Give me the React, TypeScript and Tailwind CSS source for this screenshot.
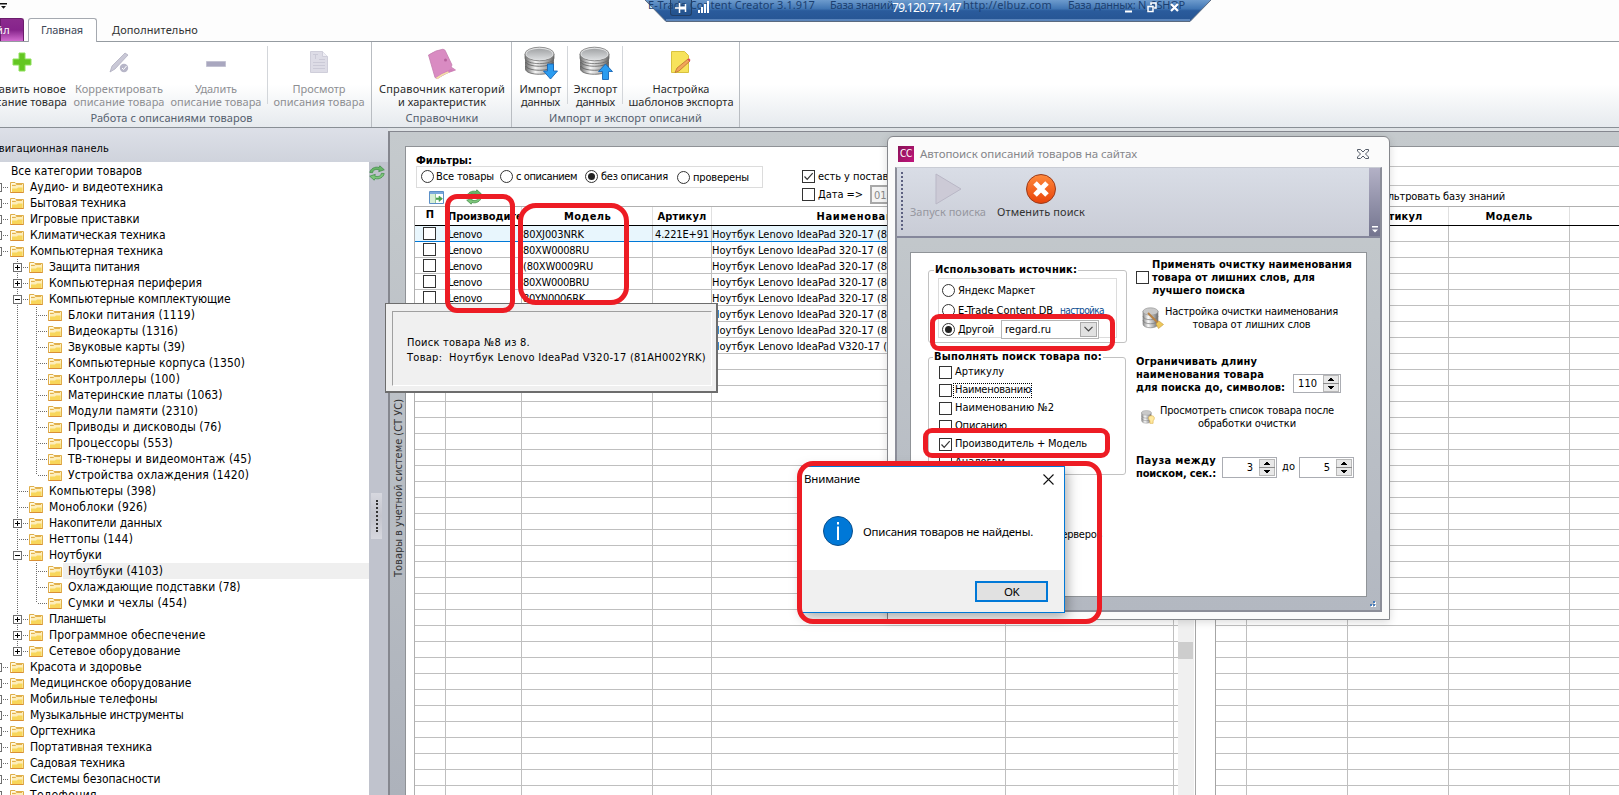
import { useLayoutEffect, useRef } from 'react';
import type { ReactNode } from 'react';

// Text run spread over a fixed length, like GDI text with hinted advances.
function Fit({ w, className = '', vertical = false, children }: { w: number; className?: string; vertical?: boolean; children: string }) {
  const ref = useRef<HTMLSpanElement>(null);

  useLayoutEffect(() => {
    const el = ref.current;
    if (!el || !children) return;
    el.style.letterSpacing = '0px';
    const rect = el.getBoundingClientRect();
    const gap = (w - (vertical ? rect.height : rect.width)) / children.length;
    el.style.letterSpacing = `${gap}px`;
  }, [w, vertical, children]);

  return <span ref={ref} className={`inline-block shrink-0 whitespace-pre ${className}`}>{children}</span>;
}

type Node = { t: string; w: number; lvl: number; box?: '+' | '-'; last?: boolean; selected?: boolean };

const TREE: Node[] = [
  { t: 'Аудио- и видеотехника', w: 133, lvl: 1, box: '+' },
  { t: 'Бытовая техника', w: 96, lvl: 1, box: '+' },
  { t: 'Игровые приставки', w: 109.5, lvl: 1, box: '+' },
  { t: 'Климатическая техника', w: 135.5, lvl: 1, box: '+' },
  { t: 'Компьютерная техника', w: 133, lvl: 1, box: '-' },
  { t: 'Защита питания', w: 90.5, lvl: 2, box: '+' },
  { t: 'Компьютерная периферия', w: 153, lvl: 2, box: '+' },
  { t: 'Компьютерные комплектующие', w: 181.5, lvl: 2, box: '-' },
  { t: 'Блоки питания (1119)', w: 127, lvl: 3 },
  { t: 'Видеокарты (1316)', w: 110, lvl: 3 },
  { t: 'Звуковые карты (39)', w: 117, lvl: 3 },
  { t: 'Компьютерные корпуса (1350)', w: 177, lvl: 3 },
  { t: 'Контроллеры (100)', w: 112, lvl: 3 },
  { t: 'Материнские платы (1063)', w: 154.5, lvl: 3 },
  { t: 'Модули памяти (2310)', w: 130, lvl: 3 },
  { t: 'Приводы и дисководы (76)', w: 153.5, lvl: 3 },
  { t: 'Процессоры (553)', w: 105, lvl: 3 },
  { t: 'ТВ-тюнеры и видеомонтаж (45)', w: 183.5, lvl: 3 },
  { t: 'Устройства охлаждения (1420)', w: 181, lvl: 3, last: true },
  { t: 'Компьютеры (398)', w: 107, lvl: 2 },
  { t: 'Моноблоки (926)', w: 98.5, lvl: 2 },
  { t: 'Накопители данных', w: 113, lvl: 2, box: '+' },
  { t: 'Неттопы (144)', w: 84, lvl: 2 },
  { t: 'Ноутбуки', w: 52.5, lvl: 2, box: '-' },
  { t: 'Ноутбуки (4103)', w: 95, lvl: 3, selected: true },
  { t: 'Охлаждающие подставки (78)', w: 172.5, lvl: 3 },
  { t: 'Сумки и чехлы (454)', w: 119, lvl: 3, last: true },
  { t: 'Планшеты', w: 56.5, lvl: 2, box: '+' },
  { t: 'Программное обеспечение', w: 156.5, lvl: 2, box: '+' },
  { t: 'Сетевое оборудование', w: 131.5, lvl: 2, box: '+', last: true },
  { t: 'Красота и здоровье', w: 111.5, lvl: 1, box: '+' },
  { t: 'Медицинское оборудование', w: 161.5, lvl: 1, box: '+' },
  { t: 'Мобильные телефоны', w: 127.5, lvl: 1, box: '+' },
  { t: 'Музыкальные инструменты', w: 153.5, lvl: 1, box: '+' },
  { t: 'Оргтехника', w: 65.5, lvl: 1, box: '+' },
  { t: 'Портативная техника', w: 122, lvl: 1, box: '+' },
  { t: 'Садовая техника', w: 95, lvl: 1, box: '+' },
  { t: 'Системы безопасности', w: 130.5, lvl: 1, box: '+' },
  { t: 'Телефония', w: 67, lvl: 1, box: '+' },
];

const PRODUCTS = [
  { model: '80XJ003NRK', mw: 61, art: '4.221E+91', name: 'Ноутбук Lenovo IdeaPad 320-17 (8' },
  { model: '80XW0008RU', mw: 66, art: '', name: 'Ноутбук Lenovo IdeaPad 320-17 (8' },
  { model: '(80XW0009RU', mw: 70, art: '', name: 'Ноутбук Lenovo IdeaPad 320-17 (8' },
  { model: '80XW000BRU', mw: 66, art: '', name: 'Ноутбук Lenovo IdeaPad 320-17 (8' },
  { model: '80YN0006RK', mw: 62, art: '', name: 'Ноутбук Lenovo IdeaPad 320-17 (8' },
  { model: '', mw: 0, art: '', name: 'Ноутбук Lenovo IdeaPad 320-17 (8' },
  { model: '', mw: 0, art: '', name: 'Ноутбук Lenovo IdeaPad 320-17 (8' },
  { model: '', mw: 0, art: '', name: 'Ноутбук Lenovo IdeaPad V320-17 (' },
];

const EMPTY_ROWS = Array.from({ length: 28 }, (_, i) => i);
const ALL_ROWS = Array.from({ length: 36 }, (_, i) => i);

/* ---------- icons ---------- */

function Folder() {
  return (
    <svg width="14" height="12" viewBox="0 0 14 12" className="shrink-0">
      <path d="M.5 1.500h4.500l1 1h7.500v9H.5z" fill="#fdeebb" stroke="#dfae4a" />
      <path d="M2 4.500h3.500l1-1H12" stroke="#e3b04c" fill="none" />
      <path d="M2 7.500h5l1-1h4.500V11H2z" fill="#f8d65a" />
      <path d="M1.500 3v8M1.500 2.500h3.500" stroke="#fffbe6" />
      <path d="M.5 11.500h13" stroke="#d98f35" />
    </svg>
  );
}

function Guides({ node, inside }: { node: Node; inside: boolean }) {
  const x = [0, -2.5, 17.5, 36.5][node.lvl];
  const w = [0, 10, 29, 48][node.lvl];
  return (
    <svg width={w} height="16" className="shrink-0" stroke="#6b6b6b" fill="none" shapeRendering="crispEdges">
      {node.lvl === 3 && <path d={`M36.500 0V${node.last ? 8 : 16}`} strokeDasharray="1 1" />}
      {inside && <path d={`M17.500 0V${node.lvl === 2 && node.last ? 8 : 16}`} strokeDasharray="1 1" />}
      <path d={`M${x + (node.box ? 5.5 : 1.5)} 8.500H${w - 1}`} strokeDasharray="1 1" />
      {node.box && (
        <>
          <rect x={x - 4} y="4.500" width="8" height="8" fill="#fff" stroke="#6f6f6f" />
          <path d={`M${x - 2.5} 8.500h5`} stroke="#000" />
          {node.box === '+' && <path d={`M${x} 6v5`} stroke="#000" />}
        </>
      )}
    </svg>
  );
}

function Refresh() {
  return (
    <svg width="16" height="16" viewBox="0 0 16 16" className="shrink-0">
      <path d="M.8 7.500C1.500 3.500 6 1.200 10 2.500L10.800.8l4.500 4-5.600 1.900.5-1.800C7 3.800 4 4.800 3.600 7.700z" fill="#67b567" stroke="#3d8a45" strokeWidth=".7" />
      <path d="M15.200 8.500c-.7 4-5.200 6.300-9.200 5L5.200 15.200l-4.500-4 5.600-1.900-.5 1.800c3.200 1.100 6.200.1 6.600-2.800z" fill="#7cc67a" stroke="#3d8a45" strokeWidth=".7" />
    </svg>
  );
}

function Database({ dir }: { dir: 'up' | 'down' }) {
  return (
    <svg width="34" height="34" viewBox="0 0 34 34" className="mt-[2px]">
      <defs>
        <linearGradient id={`db-${dir}`}>
          <stop offset="0" stopColor="#6e6e6e" />
          <stop offset=".35" stopColor="#f6f6f6" />
          <stop offset=".7" stopColor="#b5b5b5" />
          <stop offset="1" stopColor="#666" />
        </linearGradient>
        <linearGradient id={`top-${dir}`} x2="0" y2="1">
          <stop offset="0" stopColor="#a2a4a6" />
          <stop offset="1" stopColor="#dcdee0" />
        </linearGradient>
      </defs>
      {[20, 16, 12].map((y) => (
        <path key={y} d={`M1.500 ${y}v3c0 7 28 7 28 0V${y}z`} fill={`url(#db-${dir})`} stroke="#5e5e5e" strokeWidth=".8" />
      ))}
      <path d="M1 8v4c0 7.500 29 7.500 29 0V8z" fill={`url(#db-${dir})`} stroke="#6a6a6a" strokeWidth=".8" />
      <ellipse cx="15.500" cy="8" rx="14.500" ry="6.800" fill="#e2e3e4" stroke="#777" strokeWidth=".8" />
      <ellipse cx="15.500" cy="8.300" rx="13" ry="5.600" fill={`url(#top-${dir})`} />
      {dir === 'down' ? (
        <path d="M23.500 18h6v7h4l-7 8-7-8h4z" fill="#2b9cf0" stroke="#1667b8" strokeWidth=".9" />
      ) : (
        <path d="M23.500 33.500h6v-8h4l-7-7.500-7 7.500h4z" fill="#2b9cf0" stroke="#1667b8" strokeWidth=".9" />
      )}
    </svg>
  );
}

function SmallDatabase({ size }: { size: number }) {
  return (
    <svg width={size} height={size} viewBox="0 0 22 22" className="shrink-0">
      <defs>
        <linearGradient id={`sdb-${size}`}>
          <stop offset="0" stopColor="#8a8a8a" />
          <stop offset=".35" stopColor="#fafafa" />
          <stop offset="1" stopColor="#6b6b6b" />
        </linearGradient>
      </defs>
      <path d="M1 4v13c0 5 15 5 15 0V4z" fill={`url(#sdb-${size})`} stroke="#8a8a8a" strokeWidth=".7" />
      <path d="M1 9c0 5 15 5 15 0M1 13c0 5 15 5 15 0" fill="none" stroke="#777" strokeWidth=".7" />
      <ellipse cx="8.500" cy="4.500" rx="7.500" ry="3.700" fill="#c9c9c9" stroke="#999" strokeWidth=".7" />
      {size > 16 ? (
        <>
          <path d="M6 6l10 10" stroke="#b98243" strokeWidth="2" />
          <path d="M14 17l3-3 4.500 3.500-5 4z" fill="#edc85c" stroke="#c79a3a" strokeWidth=".6" />
        </>
      ) : (
        <path d="M16 9c6 0 6 5 3 8v4h-5v-4c-3-3-3-8 2-8z" fill="#ffe9a0" stroke="#dcb04a" />
      )}
    </svg>
  );
}

function Cancel() {
  return (
    <svg width="32" height="32" viewBox="0 0 32 32">
      <defs>
        <linearGradient id="cancel" x2="0" y2="1">
          <stop offset="0" stopColor="#ff8a3c" />
          <stop offset="1" stopColor="#e8430a" />
        </linearGradient>
      </defs>
      <circle cx="16" cy="16" r="14.500" fill="url(#cancel)" stroke="#9a3b1b" />
      <path d="M10 10l12 12M22 10L10 22" stroke="#fff" strokeWidth="5" />
    </svg>
  );
}

/* ---------- form controls ---------- */

function Radio({ on = false }: { on?: boolean }) {
  return (
    <span className="flex h-[13px] w-[13px] shrink-0 items-center justify-center rounded-full border border-[#333] bg-white">
      {on && <span className="h-[7px] w-[7px] rounded-full bg-[#222]" />}
    </span>
  );
}

function Check({ on = false }: { on?: boolean }) {
  return (
    <span className="flex h-[13px] w-[13px] shrink-0 items-center justify-center border border-[#333] bg-white">
      {on && (
        <svg width="11" height="11" viewBox="0 0 11 11" fill="none" stroke="#333" strokeWidth="1.200">
          <path d="M1.500 5.500l2.700 2.800L9.700 2.200" />
        </svg>
      )}
    </span>
  );
}

function Spinner({ value, className }: { value: string; className: string }) {
  return (
    <div className={`flex shrink-0 items-center justify-end border border-[#abadb3] bg-white pr-px ${className}`}>
      <span className="mt-[2px] mr-[6px] text-[11px]">{value}</span>
      <svg width="16" height="17" viewBox="0 0 16 17" shapeRendering="crispEdges">
        <path d="M.5.5h15v16H.5z" fill="#e8e8e8" stroke="#b8b8b8" />
        <path d="M0 8.500h16" stroke="#8c8c8c" />
        <path d="M7 3h2v1h1v1h1v1H5V5h1V4h1zM5 11h6v1h-1v1H9v1H7v-1H6v-1H5z" fill="#000" />
      </svg>
    </div>
  );
}

/* ---------- ribbon ---------- */

type RibbonItem = { icon: ReactNode; lines: [string, number][]; off?: boolean; className: string };

function RibbonButton({ icon, lines, off, className }: RibbonItem) {
  return (
    <div className={`flex shrink-0 flex-col items-center ${off ? 'text-[#8e8f93]' : 'text-[#2b2b2b]'} ${className}`}>
      <div className="flex h-[40px] items-center justify-center">{icon}</div>
      {lines.map(([t, w]) => (
        <Fit key={t} w={w} className="h-[13px] leading-[13px]">{t}</Fit>
      ))}
    </div>
  );
}

function Ribbon() {
  return (
    <div className="h-[128px] shrink-0 bg-[#fdfdfd] font-['Noto_Sans','Open_Sans',sans-serif] text-[11px]">
      <div className="flex h-[18px] items-start pt-[3px]">
        <svg width="8" height="7" viewBox="0 0 8 7">
          <path d="M0 0h7v1.500H0zM1 3h5L3.500 5.800z" fill="#111" />
        </svg>
      </div>
      <div className="flex h-[24px] border-b border-[#959ba1]">
        <div className="flex h-[23px] w-[24px] items-center justify-end rounded-tr-[3px] border border-b-0 border-[#6b1d6c] bg-linear-to-b from-[#8b2b8e] via-[#86238b] to-[#d36bd0] pr-[14px] text-white">
          <Fit w={14} className="mt-px -mr-px">йл</Fit>
        </div>
        <div className="ml-[4px] flex h-[24px] w-[69px] items-center justify-center rounded-t-[3px] border border-b-0 border-[#a5a9b0] bg-white pr-px text-[#3d4757]">
          <Fit w={42}>Главная</Fit>
        </div>
        <div className="ml-[15px] flex items-center pt-px text-[#333]">
          <Fit w={86}>Дополнительно</Fit>
        </div>
      </div>
      <div className="flex h-[86px] border-b border-[#898f95] bg-linear-to-b from-white from-50% to-[#e6eaee]">
        <div className="flex w-[372px] shrink-0 flex-col border-r border-[#b9bdc2]">
          <div className="flex h-[69px]">
            <RibbonButton
              className="-ml-[26px] w-[95px]"
              lines={[['Добавить новое', 89], ['описание товара', 91]]}
              icon={
                <svg width="20" height="20" viewBox="0 0 20 20">
                  <path d="M7 1h6v6h6v6h-6v6H7v-6H1V7h6z" fill="#63c622" stroke="#8ee05a" />
                </svg>
              }
            />
            <RibbonButton
              off
              className="ml-[4px] w-[92px]"
              lines={[['Корректировать', 88], ['описание товара', 91]]}
              icon={
                <svg width="20" height="21" viewBox="0 0 20 21">
                  <path d="M1 20l2-6L16 1l3 2L6 17z" fill="#c9c8d6" stroke="#a9a8ba" strokeWidth=".7" />
                  <circle cx="15" cy="16" r="4.200" fill="#b7b6c8" />
                  <path d="M13 16l1.500 1.500L17.500 14" fill="none" stroke="#fff" />
                </svg>
              }
            />
            <RibbonButton
              off
              className="ml-[5px] w-[92px]"
              lines={[['Удалить', 42], ['описание товара', 91]]}
              icon={
                <svg width="20" height="6" viewBox="0 0 20 6" className="mt-[3px]">
                  <path d="M.5.5h19v5H.5z" fill="#a9a7bf" stroke="#c3c2d2" />
                </svg>
              }
            />
            <div className="mt-[4px] ml-[5px] h-[58px] w-px bg-[#d3d6da]" />
            <RibbonButton
              off
              className="ml-[3px] w-[96px]"
              lines={[['Просмотр', 53], ['описания товара', 91]]}
              icon={
                <svg width="18" height="22" viewBox="0 0 18 22">
                  <path d="M.5.5h12l5 5v16H.5z" fill="#dddce6" stroke="#cfceda" />
                  <path d="M12.500.5v5h5" fill="#f0eff5" stroke="#cfceda" />
                  <path d="M3 3.500h5M5.500 3.500V8M9 8.500h6M3 11.500h12M3 14.500h12M3 17.500h12" stroke="#cbcad7" />
                </svg>
              }
            />
          </div>
          <Fit w={162} className="mr-[28px] self-center leading-[14px] text-[#55606e]">Работа с описаниями товаров</Fit>
        </div>
        <div className="flex w-[140px] shrink-0 flex-col items-center border-r border-[#b9bdc2] pl-px">
          <RibbonButton
            className="h-[69px]"
            lines={[['Справочник категорий', 126], ['и характеристик', 88]]}
            icon={
              <svg width="30" height="32" viewBox="0 0 30 32" className="mt-[3px]">
                <path d="M1.500 7Q9 2 16 1.200l2 1L25 17l-1 2 4.500 3Q20 24 10 30.500l-2-1z" fill="#d98bc2" stroke="#c47cae" strokeWidth=".8" />
                <path d="M9 29.500l1.500 1.500q8-6 17-8.500l-3.500-1.500q-8 3-15 8.500z" fill="#d07fb8" />
                <path d="M9.500 30.500q6-4.500 12-6.500" fill="none" stroke="#f3e2a6" strokeWidth="1.800" />
                <circle cx="18.500" cy="12" r="1.500" fill="#b6609b" />
              </svg>
            }
          />
          <Fit w={73} className="leading-[14px] text-[#55606e]">Справочники</Fit>
        </div>
        <div className="flex w-[228px] shrink-0 flex-col items-center border-r border-[#b9bdc2]">
          <div className="flex h-[69px]">
            <RibbonButton className="w-[55px] pl-[2px]" lines={[['Импорт', 42], ['данных', 39]]} icon={<Database dir="down" />} />
            <div className="mt-[4px] h-[58px] w-px bg-[#d3d6da]" />
            <RibbonButton className="w-[54px] pl-px" lines={[['Экспорт', 44], ['данных', 39]]} icon={<Database dir="up" />} />
            <div className="mt-[4px] h-[58px] w-px bg-[#d3d6da]" />
            <RibbonButton
              className="w-[116px]"
              lines={[['Настройка', 57], ['шаблонов экспорта', 105]]}
              icon={
                <svg width="20" height="24" viewBox="0 0 20 24">
                  <path d="M.5 1.500h13l4 4v17H.5z" fill="#f7e35c" stroke="#d8c240" />
                  <path d="M4 22.500L6 18 17 9l2 2L8 21z" fill="#f1a65a" stroke="#b5652b" strokeWidth=".7" />
                  <path d="M16.500 9.500l2 2 1-1.500-1.500-1.800z" fill="#e0455c" />
                </svg>
              }
            />
          </div>
          <Fit w={153} className="leading-[14px] text-[#55606e]">Импорт и экспорт описаний</Fit>
        </div>
      </div>
    </div>
  );
}

/* ---------- navigation tree ---------- */

function Sidebar() {
  return (
    <div className="flex w-[388px] shrink-0 flex-col">
      <div className="flex h-[34px] shrink-0 items-center bg-linear-to-b from-[#dde0e8] to-[#cfd3dc] pt-[8px]">
        <Fit w={124} className="-ml-[15px] text-[11px]">Навигационная панель</Fit>
      </div>
      <div className="flex min-h-0 flex-1">
        <div className="w-[369px] shrink-0 overflow-hidden bg-white pt-px text-[12px] leading-[16px]">
          <div className="flex h-[16px] pl-[11px]">
            <Fit w={131}>Все категории товаров</Fit>
          </div>
          {TREE.map((node, i) => (
            <div key={i} className="flex h-[16px] items-center">
              <Guides node={node} inside={i >= 5 && i <= 29} />
              <Folder />
              <div className={`ml-px flex h-[16px] flex-1 items-center pl-[5px] ${node.selected ? 'bg-[#efefef]' : ''}`}>
                <Fit w={node.w}>{node.t}</Fit>
              </div>
            </div>
          ))}
        </div>
        <div className="flex w-[19px] flex-col items-center bg-[#c0c3cd] pt-[3px]">
          <span className="-ml-[3px]"><Refresh /></span>
          <div className="mt-[312px] mr-[4px] flex h-[46px] w-[11px] items-center justify-center bg-linear-to-b from-[#d7d8df] via-[#c3c4cd] to-[#d7d8df]">
            <div className="h-[32px] border-l-2 border-dotted border-[#333]" />
          </div>
        </div>
      </div>
    </div>
  );
}

/* ---------- product grids ---------- */

const cell = 'h-full shrink-0 border-r border-[#bfbfbf]';
const headCell = 'flex h-full shrink-0 items-center justify-center border-r border-[#e0e0e0] font-bold';

function LeftPanel() {
  return (
    <div className="flex w-[790px] shrink-0 flex-col border-r border-[#a6a6a6] text-[11px]">
      <div className="flex h-[59px] shrink-0">
        <div className="ml-[10px] w-[347px]">
          <div className="flex h-[19px] pt-[6px] leading-[15px] font-bold">
            <Fit w={56}>Фильтры:</Fit>
          </div>
          <div className="flex h-[22px] items-center border border-[#dcdcdc] pl-[4px]">
            <span className="-mt-px"><Radio /></span>
            <Fit w={58} className="ml-[2px]">Все товары</Fit>
            <span className="-mt-px ml-[6px]"><Radio /></span>
            <Fit w={61} className="ml-[3px]">с описанием</Fit>
            <span className="-mt-px ml-[8px]"><Radio on /></span>
            <Fit w={67} className="ml-[3px]">без описания</Fit>
            <span className="mt-px ml-[9px]"><Radio /></span>
            <Fit w={56} className="mt-[2px] ml-[3px]">проверены</Fit>
          </div>
          <div className="flex h-[18px] items-center pl-[13px]">
            <svg width="15" height="13" viewBox="0 0 15 13">
              <path d="M.5.5h14v12H.5z" fill="#fff" stroke="#5b8fc7" />
              <path d="M1 1h13v2H1z" fill="#7aa9dc" />
              <path d="M1 3h5v9H1z" fill="#d7efd7" />
              <path d="M6.500 3v9M7 7h3V5l3.500 2.700L10 10.500v-2H7" fill="#48a14e" stroke="#48a14e" strokeWidth=".6" />
            </svg>
            <span className="-mt-px ml-[22px]"><Refresh /></span>
          </div>
        </div>
        <div className="ml-[39px] pt-[23px]">
          <div className="flex h-[13px] items-center">
            <Check on />
            <Fit w={98} className="mt-[2px] ml-[3px]">есть у поставщика</Fit>
          </div>
          <div className="mt-[2px] flex h-[19px] items-center">
            <Check />
            <Fit w={45} className="mt-[2px] ml-[3px]">Дата =&gt;</Fit>
            <div className="ml-[7px] h-[19px] w-[80px] border-2 border-[#a8a8a8] bg-[#f4f4f4] pl-[2px] leading-[17px] text-[#8a8a8a]">01.</div>
          </div>
        </div>
      </div>
      <div className="flex min-h-0 flex-1 pl-[8px]">
        <div className="w-[764px] shrink-0 overflow-hidden border-t border-l border-[#b0b0b0]">
          <div className="flex h-[19px] border-b border-black">
            <div className={`${headCell} w-[31px] pb-[2px]`}>П</div>
            <div className={`${headCell} w-[76px] justify-start! overflow-hidden pt-[2px] pl-[2px]`}>
              <Fit w={88}>Производитель</Fit>
            </div>
            <div className={`${headCell} w-[131px] pt-[2px] pl-px`}><Fit w={47}>Модель</Fit></div>
            <div className={`${headCell} w-[59px] pt-[2px]`}><Fit w={49}>Артикул</Fit></div>
            <div className={`${headCell} w-[294px] pt-[2px] pl-[8px]`}><Fit w={92}>Наименование</Fit></div>
          </div>
          {PRODUCTS.map((p, i) => (
            <div
              key={i}
              className={`flex h-[16px] border-b ${i === 0 ? 'border-[#0078d7] bg-[#e8f6fd]' : 'border-[#bfbfbf]'}`}
            >
              <div className={`${cell} flex w-[31px] items-center pl-[8px]`}><Check /></div>
              <div className={`${cell} w-[76px] pl-[2px] leading-[18px]`}><Fit w={34}>Lenovo</Fit></div>
              <div className={`${cell} w-[131px] pl-px leading-[18px]`}>{p.model && <Fit w={p.mw}>{p.model}</Fit>}</div>
              <div className={`${cell} w-[59px] pl-[2px] leading-[18px]`}>{p.art && <Fit w={54}>{p.art}</Fit>}</div>
              <div className={`${cell} w-[294px] leading-[18px]`}><Fit w={175}>{p.name}</Fit></div>
              <div className={`${cell} w-[168px]`} />
            </div>
          ))}
          {EMPTY_ROWS.map((i) => (
            <div key={i} className="flex h-[16px] border-b border-[#bfbfbf]">
              <div className={`${cell} w-[31px]`} />
              <div className={`${cell} w-[76px]`} />
              <div className={`${cell} w-[131px]`} />
              <div className={`${cell} w-[59px]`} />
              <div className={`${cell} w-[294px]`} />
              <div className={`${cell} w-[168px]`} />
            </div>
          ))}
        </div>
        <div className="w-[16px] bg-[#f0f0f0] pt-[436px]">
          <div className="h-[17px] w-[15px] bg-[#cdcdcd]" />
        </div>
      </div>
    </div>
  );
}

function RightPanel() {
  return (
    <div className="ml-[19px] min-w-0 flex-1 overflow-hidden border-l border-[#a6a6a6] text-[11px]">
      <div className="h-[20px] border-b border-[#c4c4c4]" />
      <div className="h-[19px] border-b border-[#c4c4c4]" />
      <div className="flex h-[20px] items-center">
        <Fit w={132} className="mt-[2px] ml-[157px]">Фильтровать базу знаний</Fit>
      </div>
      <div className="flex h-[20px] border-t border-b border-t-[#b0b0b0] border-b-black">
        <div className={`${headCell} w-[31px]`} />
        <div className={`${headCell} w-[101px]`} />
        <div className={`${headCell} w-[101px] pt-[2px]`}><Fit w={49}>Артикул</Fit></div>
        <div className={`${headCell} w-[121px] pt-[2px]`}><Fit w={47}>Модель</Fit></div>
      </div>
      {ALL_ROWS.map((i) => (
        <div key={i} className="flex h-[16px] border-b border-[#bfbfbf]">
          <div className={`${cell} w-[31px]`} />
          <div className={`${cell} w-[101px]`} />
          <div className={`${cell} w-[101px]`} />
          <div className={`${cell} w-[121px]`} />
        </div>
      ))}
    </div>
  );
}

/* ---------- floating windows ---------- */

function RemoteBar() {
  return (
    <div className="absolute top-0 left-[645px] h-[22px] w-[566px] overflow-hidden">
      <svg width="566" height="22" className="absolute inset-0">
        <defs>
          <linearGradient id="rdp" x2="0" y2="1">
            <stop offset="0" stopColor="#6d9bcd" />
            <stop offset=".4" stopColor="#4176b4" />
            <stop offset=".5" stopColor="#2a5b9c" />
            <stop offset="1" stopColor="#265593" />
          </linearGradient>
        </defs>
        <path d="M0 0H566L545 21.500H21z" fill="url(#rdp)" />
        <path d="M0 0L21 21.500H545L566 0" fill="none" stroke="#5a6a80" />
        <path d="M21 20H545" stroke="#8fb3e0" />
      </svg>
      <div className="relative flex h-[11px] items-center font-['Noto_Sans',sans-serif] text-[11px] text-[#1b3f70]">
        <Fit w={167} className="ml-[3px]">E-Trade Content Creator 3.1.917</Fit>
        <Fit w={66} className="ml-[15px]">База знаний:</Fit>
        <Fit w={89} className="ml-[67px]">http://elbuz.com</Fit>
        <Fit w={117} className="ml-[16px]">База данных: N_SSHOP</Fit>
      </div>
      <div className="absolute top-0 left-[25px] flex h-[16px] w-[22px] items-center justify-center rounded-b-[3px] border border-t-0 border-[#223f66] bg-[#1f4a80]/40">
        <svg width="12" height="10" viewBox="0 0 12 10" stroke="#fff" fill="none">
          <path d="M0 5h4M4.500 0v10M10.500 1v8" strokeWidth="1.500" />
          <path d="M5 5h6" strokeWidth="3" />
        </svg>
      </div>
      <svg width="11" height="12" viewBox="0 0 11 12" className="absolute top-[1px] left-[53px]" fill="#fff">
        <path d="M0 9h2v3H0zM3 6h2v6H3zM6 3h2v9H6zM9 0h2v12H9z" />
      </svg>
      <div className="absolute top-0 left-[247px] font-['Noto_Sans',sans-serif] text-[12px] leading-[16px] text-white">
        <Fit w={69}>79.120.77.147</Fit>
      </div>
      <svg width="56" height="12" viewBox="0 0 56 12" className="absolute top-[2px] left-[480px]" fill="none" stroke="#fff">
        <path d="M0 9.500h7" strokeWidth="2" />
        <path d="M23 4.500h5v5h-5zM26 3V1h5v5h-2" strokeWidth="1.500" />
        <path d="M46 2l7 7M53 2l-7 7" strokeWidth="2.200" />
      </svg>
    </div>
  );
}

function ProgressWindow() {
  return (
    <div className="absolute top-[303px] left-[385px] h-[90px] w-[333px] border-t border-r-2 border-b-2 border-l border-[#6d6d6d] bg-[#f0f0f0] p-[7px_4px_5px_6px]">
      <div className="h-full border border-t-[#a0a0a0] border-r-white border-b-white border-l-[#a0a0a0] pt-[23px] pl-[14px] text-[11px] leading-[15px]">
        <div className="flex"><Fit w={123}>Поиск товара №8 из 8.</Fit></div>
        <div className="flex"><Fit w={299}>Товар:  Ноутбук Lenovo IdeaPad V320-17 (81AH002YRK)</Fit></div>
      </div>
    </div>
  );
}

const SEARCH_BY: { t: string; w: number; on?: boolean; focus?: boolean }[] = [
  { t: 'Артикулу', w: 49 },
  { t: 'Наименованию', w: 76, focus: true },
  { t: 'Наименованию №2', w: 99 },
  { t: 'Описанию', w: 52 },
  { t: 'Производитель + Модель', w: 132, on: true },
  { t: 'Аналогам', w: 50 },
];

function SearchDialog() {
  return (
    <div className="absolute top-[136px] left-[887px] flex h-[484px] w-[503px] flex-col rounded-t-[6px] border border-[#85878c] bg-[#fbfbfb] px-[7px] pb-[7px] shadow-[0_2px_8px_rgba(0,0,0,0.15)]">
      <div className="flex h-[30px] shrink-0 items-center pt-[4px] pl-[3px]">
        <div className="flex h-[16px] w-[16px] items-center justify-center bg-linear-to-br from-[#8a1257] to-[#c0147b] text-[10px] leading-[16px] text-white">
          <Fit w={12}>CC</Fit>
        </div>
        <Fit w={217} className="ml-[6px] font-['Noto_Sans',sans-serif] text-[11.5px] text-[#85868a]">
          Автопоиск описаний товаров на сайтах
        </Fit>
        <svg width="12" height="10" viewBox="0 0 12 10" className="ml-[220px]" fill="none" stroke="#555c68">
          <path d="M.5.500h3L6 3 8.500.500h3v1.500L8.500 5l3 3v1.500h-3L6 7 3.500 9.500h-3V8l3-3-3-3z" />
        </svg>
      </div>

      <div className="flex min-h-0 flex-1 flex-col border-x-2 border-t border-b-2 border-[#8c8e99] border-t-[#c9ccd4] bg-linear-to-b from-[#c5cacd] to-[#b3b8c1]">
        <div className="flex h-[70px] shrink-0 border-b-2 border-[#85879b] bg-linear-to-b from-[#d9dde6] to-[#c9ccd6] font-['Noto_Sans',sans-serif] text-[11px]">
          <div className="mt-[4px] ml-[4px] h-[58px] border-l-2 border-dotted border-[#5c6080]" />
          <div className="ml-[7px] flex w-[76px] flex-col items-center pt-[5px] text-[#96979f]">
            <svg width="28" height="32" viewBox="0 0 28 32">
              <path d="M2 1l25 15L2 31z" fill="#cccad6" stroke="#b9b7c6" />
            </svg>
            <Fit w={76} className="h-[14px] leading-[13px]">Запуск поиска</Fit>
          </div>
          <div className="ml-[11px] flex w-[88px] flex-col items-center pt-[5px] text-[#333]">
            <Cancel />
            <Fit w={88} className="h-[14px] leading-[13px]">Отменить поиск</Fit>
          </div>
          <div className="ml-auto flex w-[11px] flex-col items-center justify-end bg-linear-to-b from-[#b3b1c6] to-[#74758f] pb-[3px]">
            <svg width="6" height="7" viewBox="0 0 6 7" fill="#fff">
              <path d="M0 0h6v1.500H0zM0 3.500h6L3 6.500z" />
            </svg>
          </div>
        </div>

        <div className="mt-[14px] ml-[13px] flex h-[345px] w-[457px] shrink-0 border border-[#909498] bg-white text-[11px]">
          <div className="ml-[17px] w-[198px] shrink-0">
            <fieldset className="mt-[9px] h-[81px] rounded-[3px] border border-[#c2c2c2] px-[9px]">
              <legend className="-ml-[4px] h-[16px] px-px leading-[16px] font-bold">
                <Fit w={142}>Использовать источник:</Fit>
              </legend>
              <div className="h-[60px] w-[179px] border border-[#dcdcdc] pl-[3px]">
                <div className="mt-[4px] flex h-[14px] items-center">
                  <Radio />
                  <Fit w={77} className="mt-[2px] ml-[3px]">Яндекс Маркет</Fit>
                </div>
                <div className="mt-[5px] flex h-[16px] items-center">
                  <Radio />
                  <Fit w={95} className="mt-[2px] ml-[3px]">E-Trade Content DB</Fit>
                  <Fit w={44} className="ml-[7px] text-[10px] text-[#0a4a8f] underline">настройка</Fit>
                </div>
                <div className="mt-[2px] flex h-[18px] items-center">
                  <Radio on />
                  <Fit w={36} className="mt-[2px] ml-[3px]">Другой</Fit>
                  <div className="ml-[7px] flex h-[19px] w-[98px] items-center border border-[#b5b5b5] bg-white pr-px pl-[3px]">
                    <Fit w={46} className="mt-[2px]">regard.ru</Fit>
                    <div className="ml-auto flex h-[15px] w-[17px] items-center justify-center border border-[#ababab] bg-[#e1e1e1]">
                      <svg width="9" height="6" viewBox="0 0 9 6" fill="none" stroke="#444" strokeWidth="1.200">
                        <path d="M.5.800l4 4 4-4" />
                      </svg>
                    </div>
                  </div>
                </div>
              </div>
            </fieldset>
            <fieldset className="mt-[5px] h-[127px] rounded-[3px] border border-[#c2c2c2] pl-[10px]">
              <legend className="-ml-[6px] h-[18px] px-px leading-[18px] font-bold">
                <Fit w={168}>Выполнять поиск товара по:</Fit>
              </legend>
              <div className="-mt-[3px]">
                {SEARCH_BY.map((s) => (
                  <div key={s.t} className="flex h-[18px] items-center">
                    <Check on={s.on} />
                    <span className={`ml-px flex h-[15px] items-center border border-dotted pt-px pl-px ${s.focus ? 'border-black' : 'border-transparent'}`}>
                      <Fit w={s.w}>{s.t}</Fit>
                    </span>
                  </div>
                ))}
              </div>
            </fieldset>
            <div className="mt-[52px] flex justify-end pr-[24px]">
              <Fit w={156}>Использовать прокси-серверов</Fit>
            </div>
          </div>

          <div className="ml-[10px] w-[225px] shrink-0">
            <div className="mt-[5px] flex items-center">
              <Check />
              <div className="ml-[3px] flex flex-col items-start leading-[13px] font-bold">
                <Fit w={200}>Применять очистку наименования</Fit>
                <Fit w={163}>товара от лишних слов, для</Fit>
                <Fit w={93}>лучшего поиска</Fit>
              </div>
            </div>
            <div className="mt-[8px] ml-[6px] flex items-center">
              <SmallDatabase size={22} />
              <div className="ml-[1px] flex flex-col items-center leading-[13px]">
                <Fit w={173}>Настройка очистки наименования</Fit>
                <Fit w={118}>товара от лишних слов</Fit>
              </div>
            </div>
            <div className="mt-[24px] flex h-[40px]">
              <div className="flex flex-col items-start leading-[13px] font-bold">
                <Fit w={121}>Ограничивать длину</Fit>
                <Fit w={128}>наименования товара</Fit>
                <Fit w={149}>для поиска до, символов:</Fit>
              </div>
              <Spinner value="110" className="mt-[19px] ml-[8px] h-[19px] w-[48px]" />
            </div>
            <div className="mt-[9px] ml-[5px] flex items-center">
              <SmallDatabase size={14} />
              <div className="ml-[5px] flex flex-col items-center leading-[13px]">
                <Fit w={174}>Просмотреть список товара после</Fit>
                <Fit w={98}>обработки очистки</Fit>
              </div>
            </div>
            <div className="mt-[24px] flex items-center">
              <div className="flex flex-col items-start leading-[13px] font-bold">
                <Fit w={80}>Пауза между</Fit>
                <Fit w={80}>поиском, сек.:</Fit>
              </div>
              <Spinner value="3" className="ml-[6px] h-[21px] w-[55px]" />
              <Fit w={13} className="mt-px mr-[4px] ml-[5px]">до</Fit>
              <Spinner value="5" className="h-[21px] w-[55px]" />
            </div>
          </div>
        </div>
        <svg width="7" height="7" viewBox="0 0 7 7" className="mt-[3px] mr-[4px] self-end">
          <path d="M5 2h2v2H5zM2 5h2v2H2zM5 5h2v2H5z" fill="#fff" />
          <path d="M4 1h2v2H4zM1 4h2v2H1zM4 4h2v2H4z" fill="#4a7ebb" />
        </svg>
      </div>
    </div>
  );
}

function MessageBox() {
  return (
    <div className="absolute top-[466px] left-[801px] flex h-[147px] w-[264px] flex-col border border-[#0078d7] bg-white font-['Noto_Sans',sans-serif] text-[11.5px] shadow-[2px_4px_12px_rgba(0,0,0,0.35)]">
      <div className="flex h-[25px] items-center justify-between pr-[10px] pl-[2px]">
        <Fit w={56} className="-mt-px">Внимание</Fit>
        <svg width="11" height="11" viewBox="0 0 11 11" stroke="#111" strokeWidth="1.100">
          <path d="M.5.500l10 10M10.500.500l-10 10" />
        </svg>
      </div>
      <div className="flex flex-1 items-center pb-[1px] pl-[21px]">
        <svg width="30" height="30" viewBox="0 0 30 30">
          <circle cx="15" cy="15" r="14.500" fill="#0078d7" stroke="#0a4f8c" />
          <path d="M14 6h2v2.500h-2zM14 10.500h2V24h-2z" fill="#fff" />
        </svg>
        <Fit w={170} className="mt-[2px] ml-[10px]">Описания товаров не найдены.</Fit>
      </div>
      <div className="flex h-[42px] items-center justify-end bg-[#f0f0f0] pr-[16px]">
        <div className="flex h-[21px] w-[73px] items-center justify-center border-2 border-[#0078d7] bg-[#e1e1e1] pt-px">
          <Fit w={15}>OK</Fit>
        </div>
      </div>
    </div>
  );
}

function Highlights() {
  const ring = 'pointer-events-none absolute border-5 border-[#ed1c24]';
  return (
    <>
      <div className={`${ring} top-[194px] left-[445px] h-[119px] w-[70px] rounded-[12px]`} />
      <div className={`${ring} top-[203px] left-[518px] h-[102px] w-[111px] rounded-[18px]`} />
      <div className={`${ring} top-[314px] left-[930px] h-[37px] w-[185px] rounded-[9px]`} />
      <div className={`${ring} top-[428px] left-[923px] h-[30px] w-[187px] rounded-[9px]`} />
      <div className={`${ring} top-[461px] left-[797px] h-[163px] w-[305px] rounded-[16px]`} />
    </>
  );
}

export default function App() {
  return (
    <div className="relative flex h-[795px] w-[1619px] flex-col overflow-hidden bg-[#dfe3e6] font-['DejaVu_Sans_Condensed','DejaVu_Sans',sans-serif] text-black">
      <Ribbon />
      <div className="flex min-h-0 flex-1">
        <Sidebar />
        <div className="mt-[3px] flex min-w-0 flex-1 border-t border-l-2 border-[#85878f] bg-linear-to-b from-[#c5cacd] to-[#adb2bb]">
          <div className="flex w-[15px] shrink-0 items-start justify-center pt-[267px] pl-px">
            <Fit vertical w={178} className="rotate-180 text-[11px] leading-[15px] text-[#333] [writing-mode:vertical-rl]">
              Товары в учетной системе (СТ УС)
            </Fit>
          </div>
          <div className="mt-[14px] flex min-w-0 flex-1 border-t border-l border-[#8f9296] bg-white">
            <LeftPanel />
            <RightPanel />
          </div>
        </div>
      </div>
      <RemoteBar />
      <SearchDialog />
      <ProgressWindow />
      <MessageBox />
      <Highlights />
    </div>
  );
}
